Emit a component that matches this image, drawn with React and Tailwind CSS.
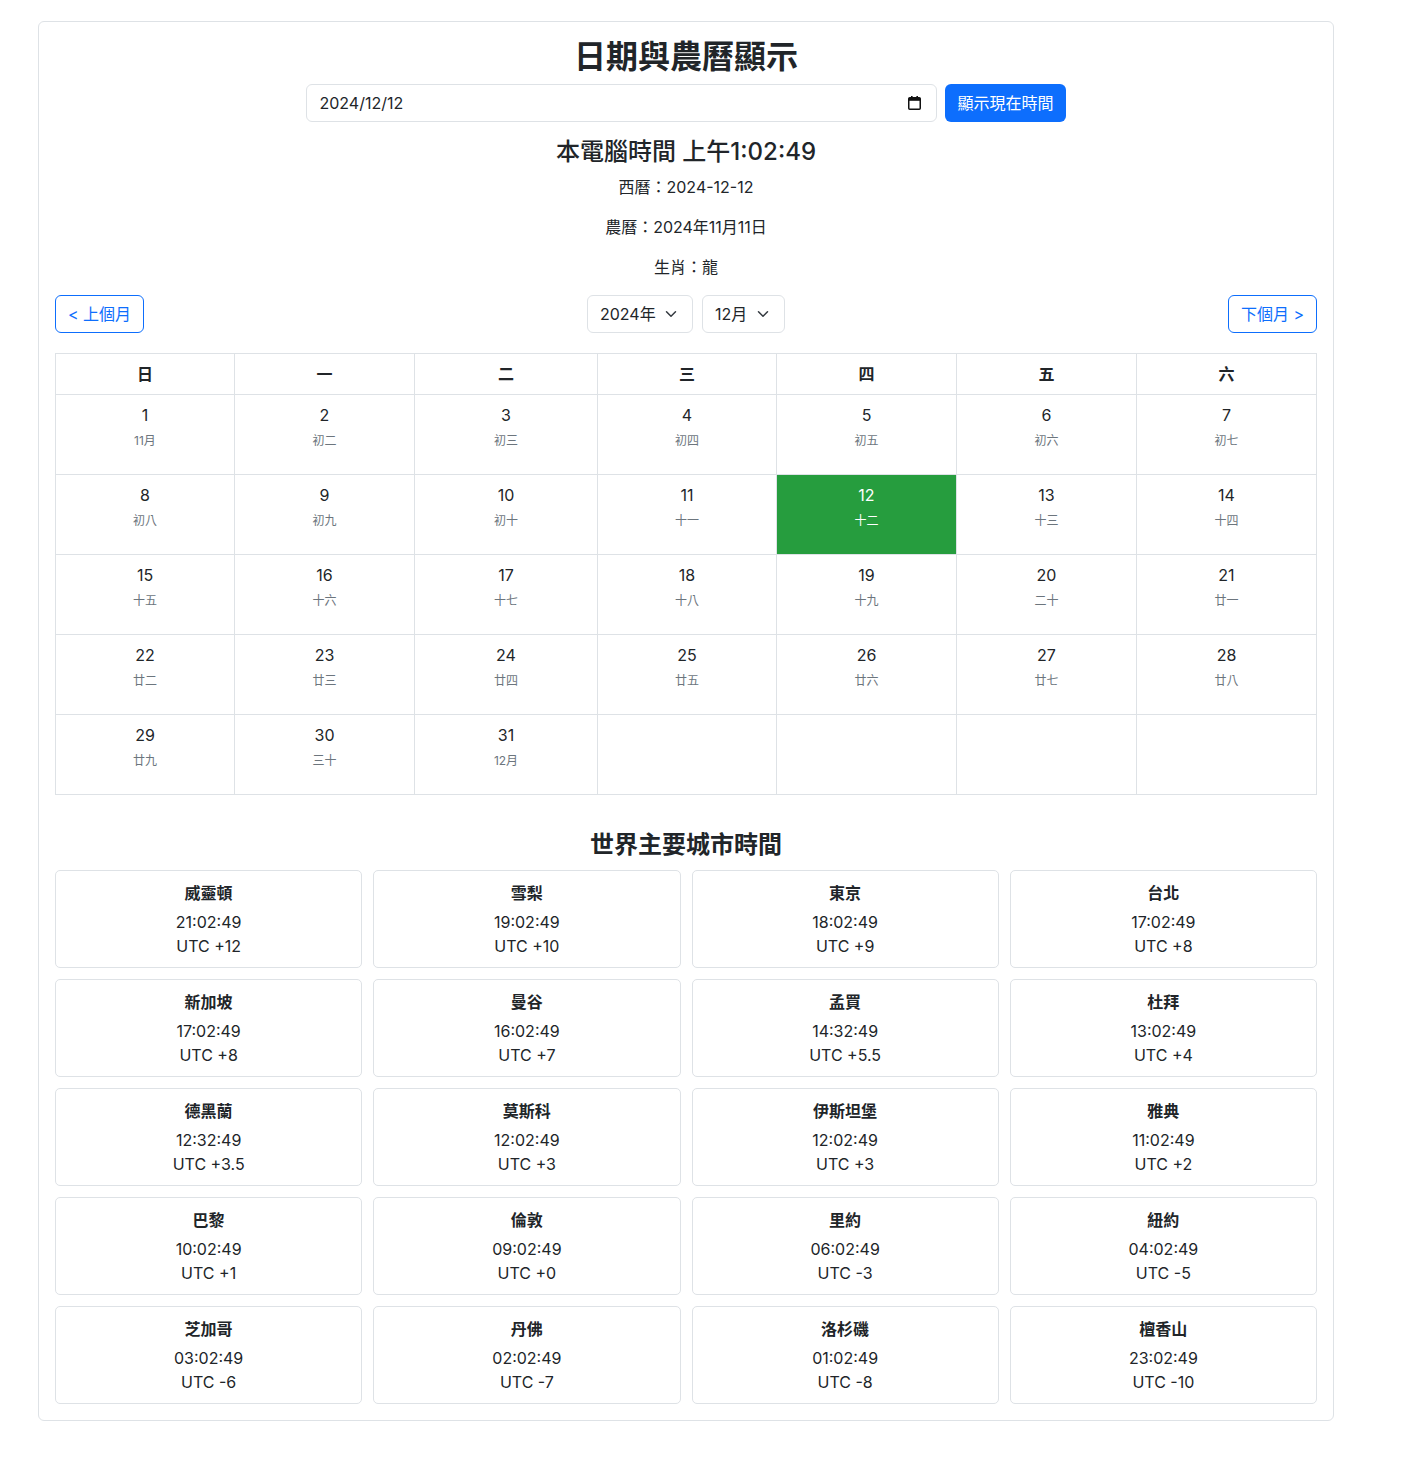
import React from 'react';

// 農曆：2024年12月
const lunarDays = [
  '11月', '初二', '初三', '初四', '初五', '初六', '初七', '初八', '初九', '初十',
  '十一', '十二', '十三', '十四', '十五', '十六', '十七', '十八', '十九', '二十',
  '廿一', '廿二', '廿三', '廿四', '廿五', '廿六', '廿七', '廿八', '廿九', '三十', '12月',
];

const weekDays = ['日', '一', '二', '三', '四', '五', '六'];

const cities = [
  { name: '威靈頓',   time: '21:02:49', utc: 'UTC +12' },
  { name: '雪梨',     time: '19:02:49', utc: 'UTC +10' },
  { name: '東京',     time: '18:02:49', utc: 'UTC +9' },
  { name: '台北',     time: '17:02:49', utc: 'UTC +8' },
  { name: '新加坡',   time: '17:02:49', utc: 'UTC +8' },
  { name: '曼谷',     time: '16:02:49', utc: 'UTC +7' },
  { name: '孟買',     time: '14:32:49', utc: 'UTC +5.5' },
  { name: '杜拜',     time: '13:02:49', utc: 'UTC +4' },
  { name: '德黑蘭',   time: '12:32:49', utc: 'UTC +3.5' },
  { name: '莫斯科',   time: '12:02:49', utc: 'UTC +3' },
  { name: '伊斯坦堡', time: '12:02:49', utc: 'UTC +3' },
  { name: '雅典',     time: '11:02:49', utc: 'UTC +2' },
  { name: '巴黎',     time: '10:02:49', utc: 'UTC +1' },
  { name: '倫敦',     time: '09:02:49', utc: 'UTC +0' },
  { name: '里約',     time: '06:02:49', utc: 'UTC -3' },
  { name: '紐約',     time: '04:02:49', utc: 'UTC -5' },
  { name: '芝加哥',   time: '03:02:49', utc: 'UTC -6' },
  { name: '丹佛',     time: '02:02:49', utc: 'UTC -7' },
  { name: '洛杉磯',   time: '01:02:49', utc: 'UTC -8' },
  { name: '檀香山',   time: '23:02:49', utc: 'UTC -10' },
];

const today = 12;

function Chevron() {
  return (
    <svg width="12" height="12" viewBox="0 0 16 16" fill="none" stroke="#343a40" strokeWidth="2" strokeLinecap="round" strokeLinejoin="round">
      <path d="M2 5l6 6 6-6" />
    </svg>
  );
}

function CalendarIcon() {
  return (
    <svg width="13" height="14" viewBox="0 0 13 14">
      <rect x="3" y="0" width="1.6" height="3" fill="#111" />
      <rect x="8.4" y="0" width="1.6" height="3" fill="#111" />
      <rect x="0.75" y="1.75" width="11.5" height="11.5" rx="1" fill="none" stroke="#111" strokeWidth="1.5" />
      <rect x="0.75" y="2" width="11.5" height="2.8" fill="#111" />
    </svg>
  );
}

export default function App() {
  // 12月1日是星期日，不需要前面空格
  const cells = [];
  for (let d = 1; d <= 31; d++) cells.push(d);
  while (cells.length % 7 !== 0) cells.push(null);

  return (
    <div
      className="min-h-screen bg-white pl-[38px] pt-[21px] pb-[38px] text-[#212529]"
      style={{ fontFamily: 'Inter, "Noto Sans CJK TC", sans-serif' }}
    >
      <div className="w-[1296px] border border-[#dee2e6] rounded-md p-4">

        {/* ── 標題 ─────────────────────────── */}
        <h1 className="text-center text-[32px] font-bold leading-[1.2] mb-2">日期與農曆顯示</h1>

        <div className="flex justify-center gap-2">
          <div className="w-[631px] h-[38px] border border-[#dee2e6] rounded-md flex items-center justify-between pl-3 pr-[15px] text-base">
            <span>2024/12/12</span>
            <CalendarIcon />
          </div>
          <button className="h-[38px] px-3 rounded-md bg-[#0d6efd] text-white text-base">顯示現在時間</button>
        </div>

        <h4 className="text-center text-2xl font-medium leading-[1.2] mt-4 mb-2">本電腦時間 上午1:02:49</h4>
        <p className="text-center text-base leading-6 mb-4">西曆：2024-12-12</p>
        <p className="text-center text-base leading-6 mb-4">農曆：2024年11月11日</p>
        <p className="text-center text-base leading-6 mb-4">生肖：龍</p>

        {/* ── 月份切換 ─────────────────────── */}
        <div className="flex items-center justify-between mb-5">
          <button className="h-[38px] px-3 rounded-md border border-[#0d6efd] text-[#0d6efd] text-base">&lt; 上個月</button>
          <div className="flex gap-[9px]">
            <div className="w-[106px] h-[38px] border border-[#dee2e6] rounded-md flex items-center justify-between pl-3 pr-[15px]">
              <span>2024年</span>
              <Chevron />
            </div>
            <div className="w-[83px] h-[38px] border border-[#dee2e6] rounded-md flex items-center justify-between pl-3 pr-[15px]">
              <span>12月</span>
              <Chevron />
            </div>
          </div>
          <button className="h-[38px] px-3 rounded-md border border-[#0d6efd] text-[#0d6efd] text-base">下個月 &gt;</button>
        </div>

        {/* ── 月曆 ─────────────────────────── */}
        <div className="grid grid-cols-[179px_180px_183px_179px_180px_180px_180px] border-l border-t border-[#dee2e6]">
          {weekDays.map((w) => (
            <div key={w} className="h-[41px] flex items-center justify-center font-bold border-r border-b border-[#dee2e6]">
              {w}
            </div>
          ))}
          {cells.map((d, i) => (
            <div
              key={i}
              className={`h-[80px] pt-[8px] text-center border-r border-b border-[#dee2e6] ${
                d === today ? 'bg-[#269d3e] text-white' : ''
              }`}
            >
              {d && (
                <>
                  <div className="leading-6">{d}</div>
                  <div className={`text-xs leading-[18px] mt-[5px] ${d === today ? 'text-white' : 'text-[#6c757d]'}`}>
                    {lunarDays[d - 1]}
                  </div>
                </>
              )}
            </div>
          ))}
        </div>

        {/* ── 世界時間 ─────────────────────── */}
        <h3 className="text-center text-2xl font-bold leading-[1.2] mt-[36px] mb-[10px]">世界主要城市時間</h3>
        <div className="grid grid-cols-4 gap-[11px]">
          {cities.map((c) => (
            <div key={c.name} className="h-[98px] border border-[#dee2e6] rounded-[5px] text-center pt-[10px]">
              <div className="font-bold leading-6 mb-[5px]">{c.name}</div>
              <div className="leading-6">{c.time}</div>
              <div className="leading-6">{c.utc}</div>
            </div>
          ))}
        </div>
      </div>
    </div>
  );
}
